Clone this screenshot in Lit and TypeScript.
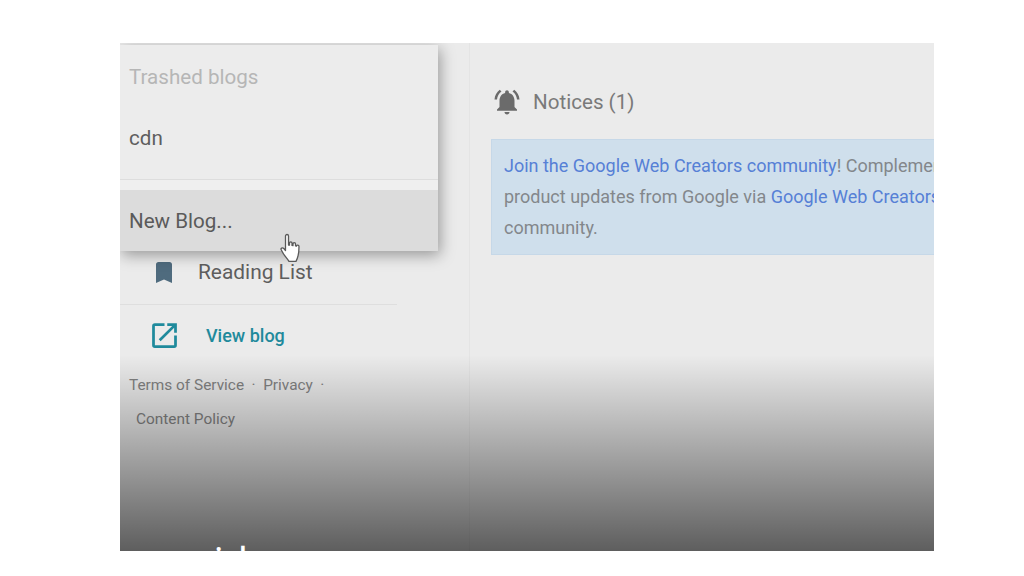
import { LitElement, html, css } from "lit";
import { customElement } from "lit/decorators.js";

@customElement("app-root")
export class AppRoot extends LitElement {
  static styles = css`
    :host { display: block; width: 1024px; height: 576px; background: #fff; overflow: hidden; font-family: Roboto, "Liberation Sans", sans-serif; padding: 43px 90px 25px 120px; box-sizing: border-box; }
    .stage { position: relative; width: 814px; height: 508px; background: #ebebeb; overflow: hidden; display: flex; }
    .side { width: 350px; flex: none; border-right: 1px solid #e4e4e4; box-sizing: border-box; padding-top: 207px; display: flex; flex-direction: column; }
    .row { display: flex; align-items: center; }
    .reading { height: 44px; padding-left: 33px; gap: 23px; font-size: 20.9px; color: #5e5e5e; }
    .reading svg { width: 22px; height: 24px; flex: none; }
    .side hr { width: 277px; margin: 10px 0 0; border: 0; border-top: 1px solid #dedede; }
    .view { height: 60px; padding-left: 28px; gap: 25px; font-size: 18px; font-weight: 500; color: #1f8a9c; }
    .view svg { width: 33px; height: 33px; flex: none; }
    .foot { font-size: 15.4px; color: #828282; padding-left: 9px; line-height: 20px; margin-top: 10px; }
    .foot .l1 { display: flex; gap: 7.5px; }
    .foot .l2 { margin: 14px 0 0 7px; }
    .main { flex: 1; min-width: 0; padding: 40px 0 0 22px; }
    .head { display: flex; align-items: center; gap: 11px; font-size: 20.6px; color: #7a7a7a; height: 38px; }
    .head svg { width: 30px; height: 30px; flex: none; }
    .notice { margin-top: 18px; margin-left: -1px; background: #cfdfec; border: 1px solid #c6d8e8; border-right: 0; height: 116px; box-sizing: border-box; padding: 10px 0 0 12px; font-size: 18px; line-height: 31px; color: #83878b; white-space: nowrap; overflow: hidden; }
    .notice a { color: #5680d6; text-decoration: none; }
    .menu { position: absolute; left: 0; top: 2px; width: 318px; height: 206px; background: #ececec; box-shadow: 2px 4px 14px rgba(0,0,0,.36); display: flex; flex-direction: column; font-size: 20.6px; }
    .menu .it { padding-left: 9px; display: flex; align-items: center; }
    .trash { height: 64px; color: #b6b6b6; }
    .cdn { height: 57px; color: #5e5e5e; }
    .gap { height: 10px; margin-top: 13px; border-top: 1px solid #dddddd; background: #efefef; }
    .new { flex: 1; background: #dcdcdc; color: #5a5a5a; }
    .fade { position: absolute; left: 0; right: 0; top: 312px; bottom: 0; background: linear-gradient(rgba(0,0,0,0), rgba(0,0,0,.6)); pointer-events: none; }
    .cursor { position: absolute; left: 160px; top: 190px; width: 22px; height: 30px; }
    .big { position: absolute; left: 94px; top: 497px; color: #fff; font-size: 38px; line-height: 44px; letter-spacing: 15px; }
  `;

  render() {
    return html`<div class="stage">
      <div class="side">
        <div class="row reading">
          <svg viewBox="0 0 22 24"><path fill="#4f6b7e" d="M3 4.500C3 3 4 2 5.500 2h11C18 2 19 3 19 4.500V23l-8-3.400L3 23z"/></svg>
          <span>Reading List</span>
        </div>
        <hr />
        <div class="row view">
          <svg viewBox="0 0 24 24"><path fill="#1f8a9c" d="M19 19H5V5h7V3H5a2 2 0 0 0-2 2v14a2 2 0 0 0 2 2h14a2 2 0 0 0 2-2v-7h-2zM14 3v2h3.600l-9.800 9.800 1.400 1.400L19 6.400V10h2V3z"/></svg>
          <span>View blog</span>
        </div>
        <div class="foot">
          <div class="l1"><span>Terms of Service</span><span>·</span><span>Privacy</span><span>·</span></div>
          <div class="l2">Content Policy</div>
        </div>
      </div>
      <div class="main">
        <div class="head">
          <svg viewBox="0 0 24 24"><path fill="#6b6b6b" d="M12 22c1.100 0 2-.9 2-2h-4c0 1.100.9 2 2 2zm6-6v-5c0-3.100-1.600-5.600-4.500-6.300V4c0-.8-.7-1.500-1.500-1.500s-1.500.7-1.500 1.500v.7C7.600 5.400 6 7.900 6 11v5l-2 2v1h16v-1zM7.600 3.600 6.200 2.200C3.800 4 2.200 6.800 2 10h2c.2-2.600 1.500-4.900 3.600-6.400zM20 10h2c-.2-3.200-1.800-6-4.200-7.800l-1.400 1.400c2.100 1.500 3.400 3.800 3.600 6.400z"/></svg>
          <span>Notices (1)</span>
        </div>
        <div class="notice">
          <a>Join the Google Web Creators community</a>! Complementary to this blog, get tips and<br />
          product updates from Google via <a>Google Web Creators</a> and join the<br />
          community.
        </div>
      </div>
      <div class="menu">
        <div class="it trash">Trashed blogs</div>
        <div class="it cdn">cdn</div>
        <div class="gap"></div>
        <div class="it new">New Blog...</div>
      </div>
      <div class="fade"></div>
      <div class="big">il</div>
      <svg class="cursor" viewBox="0 0 22 30"><path fill="#fff" stroke="#5a5a5a" stroke-width="1.300" stroke-linejoin="round" d="M5.500 3c0-2 3-2 3 0v9l1 .2V10c0-1.500 2.500-1.500 2.500 0v2.400l1 .2v-1.800c0-1.500 2.500-1.500 2.500 0v2l1 .2c0-1.300 2.500-1.300 2.500.4 0 4-.3 7-1 9.500-.4 2-1 3.500-2 5.500H9c-1-2-3-4-5.500-7.500L1.300 17c-1-1.500 1-3 2.500-1.500l1.700 2z"/></svg>
    </div>`;
  }
}
